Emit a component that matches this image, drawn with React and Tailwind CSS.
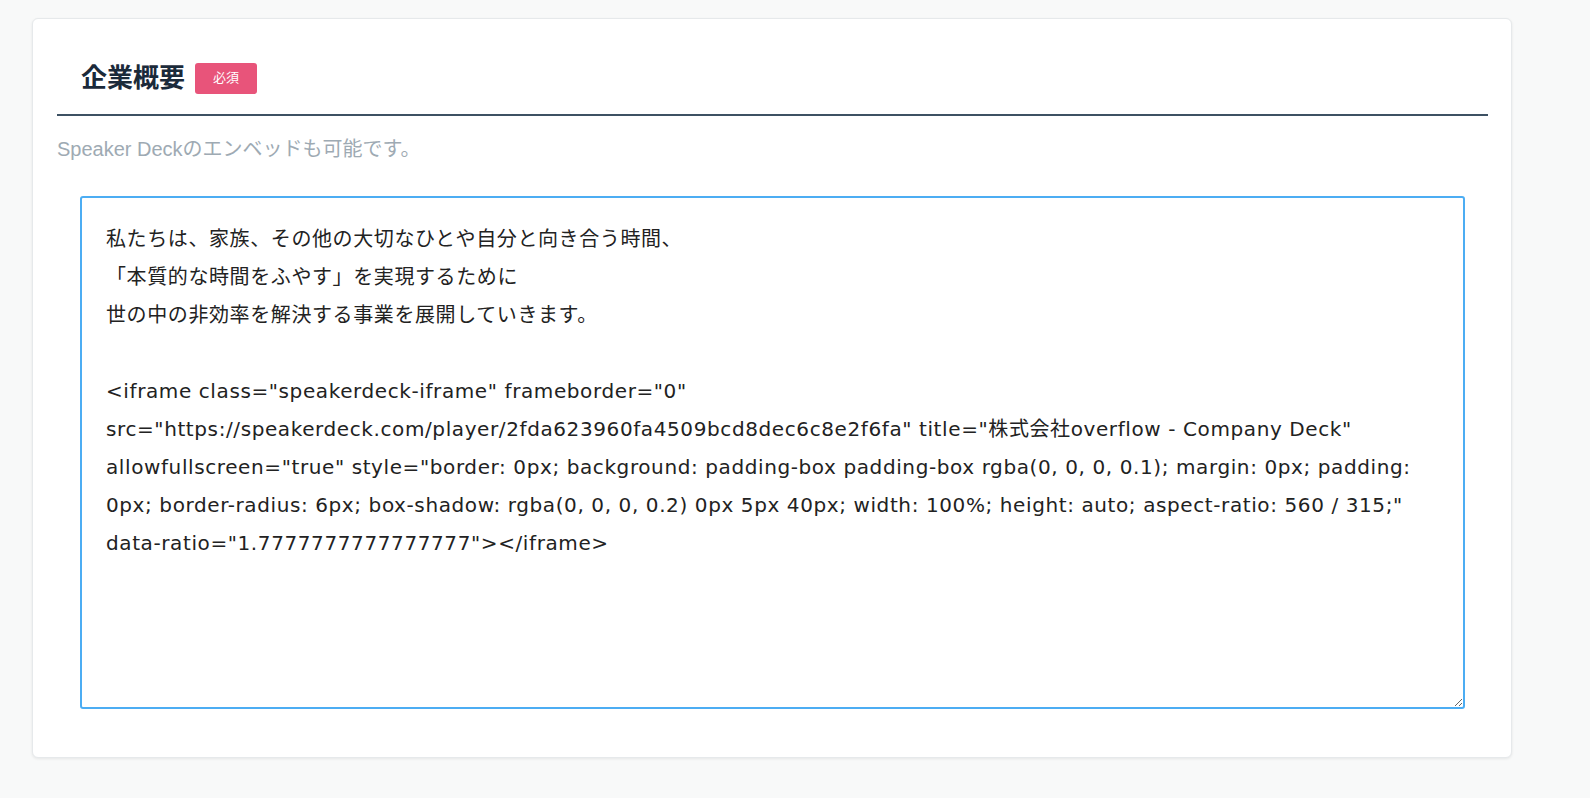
export default function App() {
  const text = `私たちは、家族、その他の大切なひとや自分と向き合う時間、
「本質的な時間をふやす」を実現するために
世の中の非効率を解決する事業を展開していきます。

<iframe class="speakerdeck-iframe" frameborder="0" src="https://speakerdeck.com/player/2fda623960fa4509bcd8dec6c8e2f6fa" title="株式会社overflow - Company Deck" allowfullscreen="true" style="border: 0px; background: padding-box padding-box rgba(0, 0, 0, 0.1); margin: 0px; padding: 0px; border-radius: 6px; box-shadow: rgba(0, 0, 0, 0.2) 0px 5px 40px; width: 100%; height: auto; aspect-ratio: 560 / 315;" data-ratio="1.7777777777777777"></iframe>`;
  return (
    <div className="min-h-[798px] bg-[#f8f9f9] pt-[18px] pl-[32px]" style={{ fontFamily: '"Liberation Sans","Noto Sans CJK JP",sans-serif' }}>
      <div className="w-[1480px] h-[740px] bg-white rounded-md border border-[#e6e9eb] shadow-[0_1px_3px_rgba(0,0,0,0.08)] px-[24px] pt-[42px]">
        <div className="flex items-center gap-[10px] pl-[24px] h-[34px]">
          <h2 className="text-[26px] font-bold text-[#1b2a3a]">企業概要</h2>
          <span className="bg-[#e8547a] text-white text-[13px] rounded-[3px] w-[62px] h-[31px] flex items-center justify-center">必須</span>
        </div>
        <div className="mt-[19px] h-[2px] bg-[#3d5163] w-[1431px]"></div>
        <p className="mt-[18px] text-[20px] text-[#9eaab3]">Speaker Deckのエンベッドも可能です。</p>
        <textarea
          defaultValue={text}
          spellCheck={false}
          className="mt-[32px] ml-[23px] block w-[1385px] h-[513px] border-2 border-[#4cadf3] rounded-[3px] px-[24px] pt-[22px] text-[20px] leading-[38px] tracking-[0.6px] text-[#222] outline-none resize-y"
          style={{ fontFamily: '"DejaVu Sans","Noto Sans CJK JP",sans-serif' }}
        />
      </div>
    </div>
  );
}
